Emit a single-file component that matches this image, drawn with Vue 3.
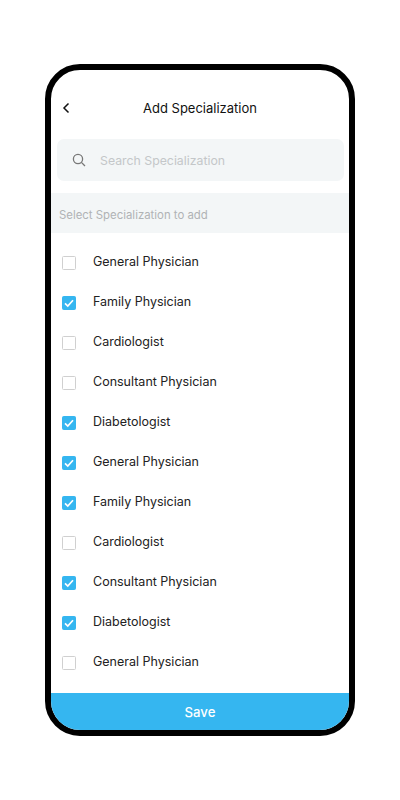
<script setup>
const items = [
  { name: 'General Physician', checked: false },
  { name: 'Family Physician', checked: true },
  { name: 'Cardiologist', checked: false },
  { name: 'Consultant Physician', checked: false },
  { name: 'Diabetologist', checked: true },
  { name: 'General Physician', checked: true },
  { name: 'Family Physician', checked: true },
  { name: 'Cardiologist', checked: false },
  { name: 'Consultant Physician', checked: true },
  { name: 'Diabetologist', checked: true },
  { name: 'General Physician', checked: false },
]
</script>

<template>
  <div class="page">
    <div class="phone">
      <header class="header">
        <svg class="back" width="10" height="12" viewBox="0 0 10 12" fill="none">
          <path d="M7.5 1.5 3 6l4.5 4.5" stroke="#111" stroke-width="1.5" />
        </svg>
        <div class="title">Add Specialization</div>
      </header>

      <div class="search">
        <svg width="14" height="14" viewBox="0 0 14 14" fill="none">
          <circle cx="6" cy="6" r="4.6" stroke="#777" stroke-width="1.3" />
          <path d="M9.4 9.4 13 13" stroke="#777" stroke-width="1.3" />
        </svg>
        <span class="placeholder">Search Specialization</span>
      </div>

      <div class="band">Select Specialization to add</div>

      <ul class="list">
        <li v-for="(item, idx) in items" :key="idx" class="row">
          <span class="box" :class="{ checked: item.checked }">
            <svg v-if="item.checked" width="14" height="14" viewBox="0 0 14 14" fill="none">
              <path d="M3 7.3 5.8 10 11 4.3" stroke="#fff" stroke-width="1.7" />
            </svg>
          </span>
          <span class="name">{{ item.name }}</span>
        </li>
      </ul>

      <button type="button" class="save">Save</button>
    </div>
  </div>
</template>

<style scoped>
.page {
  width: 400px;
  height: 800px;
  padding: 64px 45px;
  box-sizing: border-box;
  background: #fff;
  font-family: Inter, "Noto Sans", sans-serif;
}
.phone {
  height: 672px;
  box-sizing: border-box;
  border: 6px solid #000;
  border-radius: 35px;
  overflow: hidden;
  display: flex;
  flex-direction: column;
  background: #fff;
}
.header {
  height: 69px;
  flex: none;
  position: relative;
  display: flex;
  align-items: center;
  justify-content: center;
}
.back {
  position: absolute;
  left: 10px;
  top: 32px;
}
.title {
  font-size: 13px;
  font-weight: 400;
  color: #111;
  margin-top: 7px;
}
.search {
  flex: none;
  height: 42px;
  margin: 0 5px 0 6px;
  padding-left: 15px;
  display: flex;
  align-items: center;
  gap: 14px;
  border-radius: 7px;
  background: #f3f6f7;
}
.placeholder {
  font-size: 12.3px;
  color: #c4c7c9;
}
.band {
  flex: none;
  height: 40px;
  margin-top: 12px;
  padding: 4px 0 0 8px;
  box-sizing: border-box;
  display: flex;
  align-items: center;
  font-size: 11.4px;
  color: #b0b3b5;
  background: #f3f6f7;
}
.list {
  flex: 1;
  margin: 0;
  padding: 8px 0 0;
  list-style: none;
}
.row {
  height: 40.1px;
  display: flex;
  align-items: center;
  padding-left: 11px;
}
.box {
  width: 14px;
  height: 14px;
  box-sizing: border-box;
  flex: none;
  margin-top: 3px;
  border: 1.3px solid #d0d0d0;
  border-radius: 1.5px;
  display: flex;
  align-items: center;
  justify-content: center;
  background: #fff;
}
.box svg {
  flex: none;
}
.box.checked {
  border-color: #35b6f0;
  background: #35b6f0;
}
.name {
  margin-left: 17px;
  font-size: 12.5px;
  color: #222;
}
.save {
  flex: none;
  height: 37px;
  border: 0;
  padding: 1px 0 0;
  font-family: inherit;
  font-size: 13.2px;
  font-weight: 500;
  color: #fff;
  background: #35b6f0;
}
</style>

<style>
html, body { margin: 0; background: #fff; }
</style>
